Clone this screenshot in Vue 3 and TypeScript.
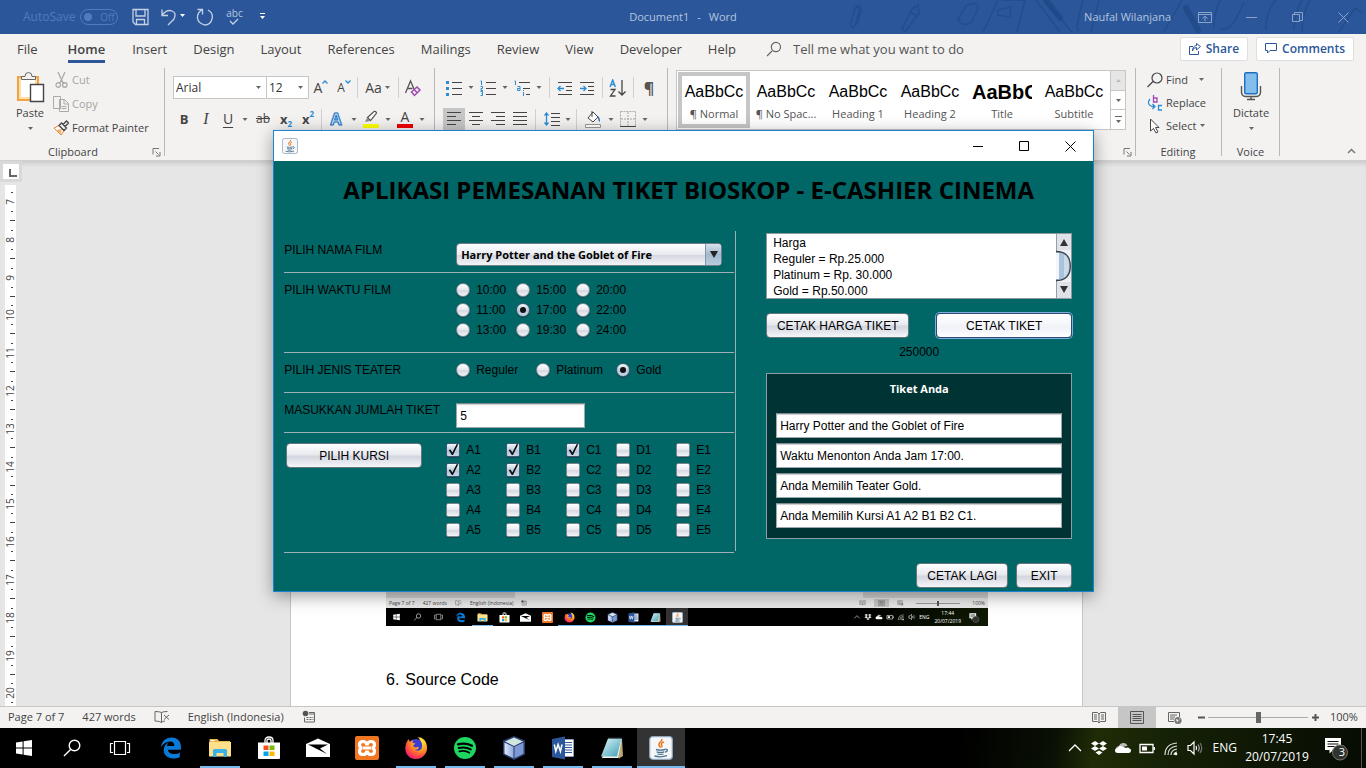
<script setup lang="ts">
import { ref } from 'vue'

const tabs = ['File', 'Home', 'Insert', 'Design', 'Layout', 'References', 'Mailings', 'Review', 'View', 'Developer', 'Help']

const styleCells = [
  { name: '¶ Normal', kind: 'plain', sample: 'AaBbCc' },
  { name: '¶ No Spac...', kind: 'plain', sample: 'AaBbCc' },
  { name: 'Heading 1', kind: 'plain', sample: 'AaBbCc' },
  { name: 'Heading 2', kind: 'plain', sample: 'AaBbCc' },
  { name: 'Title', kind: 'title', sample: 'AaBbC' },
  { name: 'Subtitle', kind: 'subtitle', sample: 'AaBbCc' },
]

const rulerNumbers = Array.from({ length: 14 }, (_, i) => ({ n: i + 7, y: Math.round(17 + i * 37.8) }))

const times = ['10:00', '15:00', '20:00', '11:00', '17:00', '22:00', '13:00', '19:30', '24:00']
const time = ref('17:00')
const theaters = ['Reguler', 'Platinum', 'Gold']
const theater = ref('Gold')
const films = ['Harry Potter and the Goblet of Fire']
const film = ref(films[0])
const amount = ref('5')
const seats = [1, 2, 3, 4, 5].flatMap((row) => ['A', 'B', 'C', 'D', 'E'].map((col) => col + row))
const chosen = ref<string[]>(['A1', 'A2', 'B1', 'B2', 'C1'])
const prices = ref('Harga\nReguler = Rp.25.000\nPlatinum = Rp. 30.000\nGold = Rp.50.000')
const ticket = ref([
  'Harry Potter and the Goblet of Fire',
  'Waktu Menonton Anda Jam 17:00.',
  'Anda Memilih Teater Gold.',
  'Anda Memilih Kursi A1 A2 B1 B2 C1.',
])

const system = ['start', 'search', 'taskview']
const apps = [
  { id: 'edge', open: false },
  { id: 'folder', open: true },
  { id: 'store', open: false },
  { id: 'mail', open: false },
  { id: 'xampp', open: false },
  { id: 'firefox', open: true },
  { id: 'spotify', open: true },
  { id: 'netbeans', open: true },
  { id: 'word', open: true },
  { id: 'notepad', open: true },
  { id: 'java', open: true },
]
const tray = ['up', 'dropbox', 'cloud', 'battery', 'wifi', 'sound']
</script>

<template>
  <div class="desktop">
    <svg class="sprite" aria-hidden="true">
      <defs>
        <linearGradient id="gCube" x1="0" x2="1"><stop offset="0" stop-color="#dfe9fb" /><stop offset="1" stop-color="#8fa9dc" /></linearGradient>
        <linearGradient id="gNote" x1="0" y1="0" x2="1" y2="1"><stop offset="0" stop-color="#e4f7fb" /><stop offset="1" stop-color="#3a9db4" /></linearGradient>
        <radialGradient id="gFox" cx="0.7" cy="0.2" r="0.9"><stop offset="0" stop-color="#fff044" /><stop offset="0.45" stop-color="#ff9a1f" /><stop offset="0.8" stop-color="#ff3a4c" /><stop offset="1" stop-color="#e3188b" /></radialGradient>
      </defs>
      <symbol id="start" viewBox="0 0 24 24"><path fill="#fff" d="M4 6.400l6.600-1v6.100H4zM11.600 5.200L20 4v7.500h-8.400zM4 12.500h6.600v6.100L4 17.600zM11.600 12.500H20V20l-8.400-1.200z" /></symbol>
      <symbol id="search" viewBox="0 0 24 24"><g fill="none" stroke="#fff" stroke-width="1.400"><circle cx="14.500" cy="9.500" r="5.300" /><path d="M10.800 13.200L4 20" /></g></symbol>
      <symbol id="taskview" viewBox="0 0 24 24"><g fill="none" stroke="#fff" stroke-width="1.200"><path d="M6.500 5.500h11v13h-11zM5 7.500H2.500v9H5M19 7.500h2.500v9H19" /></g></symbol>
      <symbol id="edge" viewBox="0 0 24 24"><path fill="#0a7ad8" d="M2 11C3 5 7 1.500 12.500 1.500c6.500 0 9.700 4.800 9.500 10.200v2H9c.3 3 3.200 4.300 6 4.300 2.300 0 4.200-.6 5.800-1.600v4.700c-2 1-4.200 1.500-6.600 1.500-5.800 0-9.500-3.600-9.500-8.500 0-3.500 2-6.300 5-7.700-1 .9-1.500 2-1.700 3.500h7.400c0-2.300-1.300-4.300-4.200-4.300C7.500 5.600 4 7.800 2 11z" /></symbol>
      <symbol id="folder" viewBox="0 0 24 24"><path fill="#e8b84c" d="M1.500 3h8l1.500 2h11v4h-20.500z" /><path fill="#ffe08a" d="M1 6h22v14.500H1z" /><path fill="#fff" d="M2.500 4h4v1h-4z" /><path fill="#38b0e8" d="M5 21v-6.500q0-1.500 1.500-1.500h11q1.500 0 1.500 1.500V21h-3.500v-4h-7v4z" /></symbol>
      <symbol id="store" viewBox="0 0 24 24"><path fill="none" stroke="#fff" stroke-width="1.300" d="M8 7V4.500Q8 1 12 1t4 3.500V7M10 7V4.500Q10 3 12 3t2 1.500V7" /><path fill="#fff" d="M1 6.500h22V22q0 1-1 1H2q-1 0-1-1z" /><path fill="#f25022" d="M6.500 9.500h5v4.500h-5z" /><path fill="#7fba00" d="M12.500 9.500h5v4.500h-5z" /><path fill="#00a4ef" d="M6.500 15.500h5v4.500h-5z" /><path fill="#ffb900" d="M12.500 15.500h5v4.500h-5z" /></symbol>
      <symbol id="mail" viewBox="0 0 24 24"><path fill="#fff" d="M0 8l12-5.500L24 8v13H0z" /><path fill="#000" d="M2 8.500h20l-8 4 7 5.500L12 13.500z" /></symbol>
      <symbol id="xampp" viewBox="0 0 24 24"><rect width="24" height="24" rx="2" fill="#ef7622" /><path fill="none" stroke="#fff" stroke-width="3.200" d="M8 5.500c-3 0-3.500 2-3.500 3.200 0 1.600 1 3.300 3 3.300-2 0-3 1.600-3 3.200S5.500 18.500 8 18.500s3.500-1.500 4-3.500c.5 2 1.500 3.500 4 3.500s3.500-1.700 3.500-3.300-1-3.200-3-3.200c2 0 3-1.700 3-3.300s-1-3.200-3.500-3.200-3.500 1.500-4 3.500c-.5-2-1.500-3.500-4-3.500zM8 12h8" /></symbol>
      <symbol id="firefox" viewBox="0 0 24 24"><circle cx="12" cy="12.500" r="9.500" fill="#3d3bd1" /><path fill="url(#gFox)" d="M2.500 6.500l2-3.500 1.500 3q1.200-1.600 3.500-2-1.500 1.500-.8 3l2.800.5-2.500 2.200q1 2.200 3.800 1.600 1.200-.8 2.200 0-1 3-4.500 2.500 4 2.500 7-1 1.500-5-1-8-1.500-2.500-3-3.800 4 .5 6 3Q17 2 15 1q5 1 7 5.500 2.500 6.500-.5 11-3.500 5.500-9.800 5.500-6 0-9.200-5.200Q0 12.500 2.500 6.500z" /></symbol>
      <symbol id="spotify" viewBox="0 0 24 24"><circle cx="12" cy="12" r="11" fill="#1ed760" /><g fill="none" stroke="#000" stroke-linecap="round"><path stroke-width="2.300" d="M5 8.300q7.500-2 14 1.400" /><path stroke-width="2" d="M5.700 12q6.500-1.700 12 1.400" /><path stroke-width="1.600" d="M6.300 15.400q5.500-1.400 10.200 1.300" /></g></symbol>
      <symbol id="netbeans" viewBox="0 0 24 24"><path fill="#2a3c6e" d="M12 0l11 4.500v14L12 24 1 18.500v-14z" /><path fill="#d0e6df" d="M12 1.500l9 4-9 4.500-9-4.500z" /><path fill="url(#gCube)" d="M2.500 6.500l9 4.300v11.500l-9-4.500z" /><path fill="#7d98d2" d="M21.500 6.500l-9 4.300v11.500l9-4.500z" /></symbol>
      <symbol id="word" viewBox="0 0 24 24"><path fill="#fff" stroke="#9ab2dc" stroke-width=".6" d="M12 3.500h10.500v17H12z" /><path stroke="#2b579a" stroke-width="1.200" d="M14 6.500h7M14 9h7M14 11.500h7M14 14h7M14 16.500h7" /><path fill="#2b579a" d="M1 3l13-2.500v23L1 21z" /><path fill="none" stroke="#fff" stroke-width="1.500" d="M3.300 8.500l1.500 7 2.300-7 2.300 7 1.600-7" /></symbol>
      <symbol id="notepad" viewBox="0 0 24 24"><path fill="#b9a878" d="M22 3l1 17-4 2.500-2-2z" /><path fill="#f4f4ec" d="M9 3h13l-4 19H2z" /><path fill="url(#gNote)" d="M8 2.500h13.500L17 20.500H1z" /><path stroke="#4a5a60" stroke-width="1.400" stroke-dasharray="1 1" d="M8.500 2.300H22" /></symbol>
      <symbol id="java" viewBox="0 0 24 24"><rect x=".7" y=".7" width="22.600" height="22.600" rx="3" fill="#f5f7f9" stroke="#8fa6bb" stroke-width="1.200" /><g fill="none" stroke="#e8751a" stroke-width="1.500"><path d="M12.800 3c1 2.500-4.500 3.800-2.600 6.500.5 1 1.300 1.500.8 2.300" /><path d="M15 6c-3 1-3 2-2.200 3.200.5.900.1 1.500-.4 2.100" /></g><g fill="none" stroke="#4b7291" stroke-width="1.300"><path d="M7 13.500q4.500 1.200 9.200 0M7.600 15.800q4 1.200 7.600 0M8.400 18q3 .9 6 0M5.500 20q6 1.700 12.500-.3M16.300 13.200c3.200-.4 2.500 2.500-.3 3" /></g></symbol>
      <symbol id="up" viewBox="0 0 18 18"><path fill="none" stroke="#fff" stroke-width="1.300" d="M3 12l6-6 6 6" /></symbol>
      <symbol id="dropbox" viewBox="0 0 18 18"><path fill="#fff" d="M5 2l4 2.500L5 7 1 4.500zM13 2l4 2.500L13 7 9 4.500zM5 7l4 2.500L5 12 1 9.500zM13 7l4 2.500-4 2.500-4-2.500zM9 11.500l3.500 2L9 16l-3.500-2.500z" /></symbol>
      <symbol id="cloud" viewBox="0 0 18 18"><path fill="#bbb" d="M2 9q1-2 3-2 1-3 4.500-3 3 0 4 3z" /><path fill="#fff" d="M4 14q-3 0-3-2.500T4 8.500q1.500-2 4-1.300L12 9q2-1 3.500.5Q17.500 10 17 12q-.3 2-2.500 2z" /></symbol>
      <symbol id="battery" viewBox="0 0 18 18"><path fill="none" stroke="#fff" stroke-width="1.300" d="M2 5.500h13v8H2z" /><path fill="#fff" d="M4 7.500h5v4H4zM15.500 8h1.500v3h-1.500z" /></symbol>
      <symbol id="wifi" viewBox="0 0 18 18"><g fill="none" stroke="#ddd" stroke-width="1.200"><path d="M3 16Q3 5 15 4M6 16q0-8 9-9M9 16q0-5 6-6M12 16q0-2.500 3-3" /></g><circle cx="14" cy="15" r="1.300" fill="#fff" /></symbol>
      <symbol id="sound" viewBox="0 0 18 18"><g fill="none" stroke="#fff" stroke-width="1.200"><path d="M2 6.500h2.500L8 3v12l-3.500-3.500H2z" /><path d="M10 7q1.200 2 0 4" /><path stroke="#aaa" d="M12 5.500q2.500 3.500 0 7" /><path stroke="#777" d="M14 4q3.500 5 0 10" /></g></symbol>
      <symbol id="caret" viewBox="0 0 7 5"><path fill="#666" d="M1 1h5L3.500 4z" /></symbol>
      <symbol id="launch" viewBox="0 0 9 9"><path fill="none" stroke="#777" d="M1 6.500v-6h6M3.500 3.500l3 3M8 4v4H4" /></symbol>
      <symbol id="proof" viewBox="0 0 16 14"><path fill="none" stroke="#666" d="M7.500 12.500v-10Q5.500 1.500 1 1.500v9.500q4.500 0 6.500 1.500Q9 11 11 11M7.500 2.500Q9 1.500 13.500 1.500M10 5l5 4.500M15 5l-5 4.500" /></symbol>
      <symbol id="macro" viewBox="0 0 14 14"><circle cx="3.500" cy="3.500" r="2.800" fill="#555" /><path fill="none" stroke="#666" d="M7 2.500h5.500v9.500h-10V7.500M7 4h5" /><path stroke="#666" stroke-dasharray="2 1" d="M4.500 7.500h7M4.500 9.500h7" /></symbol>
      <symbol id="read" viewBox="0 0 14 14"><path fill="none" stroke="#666" d="M7 3L5.500 1.500h-5v9h5L7 12l1.500-1.500h5v-9h-5zv9M2 4h3M2 6h3M2 8h3M9 4h3M9 6h3M9 8h3" /></symbol>
      <symbol id="print" viewBox="0 0 14 14"><path fill="none" stroke="#555" d="M.5.500h13v12H.5zM2.500 3.500h9M2.500 5.500h9M2.500 7.500h9M2.500 9.500h9" /></symbol>
      <symbol id="web" viewBox="0 0 14 14"><path fill="none" stroke="#666" d="M6 10.500H.5v-9h11V6M2 4h7M2 6h5M2 8h4" /><circle cx="10" cy="9.500" r="3.600" fill="#777" /><path fill="#f3f2f1" d="M8 8l2.500 1-.5 2-1.500-1zM11 6.500l1.500 2h-1z" /></symbol>
      <symbol id="bell" viewBox="0 0 26 26"><path fill="#fff" d="M1 3h16v12H9l-3.500 3.500V15H1z" /><path stroke="#111" stroke-width="1.200" d="M3.500 6.500h11M3.500 9h11M3.500 11.500h7" /><circle cx="16" cy="17.500" r="7.500" fill="#30332e" stroke="#777" /></symbol>
    </svg>

    <header class="titlebar">
      <svg class="doodles" viewBox="0 0 520 34" aria-hidden="true">
        <g fill="none" stroke="#1e4684" stroke-opacity=".6" stroke-width="1.500">
          <path d="M8 10q3-6 6-3l-4 16q-3 8-6 2L9 9q6-5 6 2l-4 14M56 29l10-20 6-4 1 8-14 19zM63 12l7 3" />
          <path d="M112 19l8-13q10-6 12 2l-6 14q-10 6-14-3zM137 32l16-34M155 0h24l-8 32M152 10l13-3-1 10-12-2zM198 0l28 32M190 0l24 32M233 29q-5 5 4-29M245 32l8-32M318 32l18-32M368 28q0-16 6-28M374 28q10 8 24-26M420 30q0-20 10-30M456 32q0-18 8-32M448 30q0-16 8-30M493 32l16-24 8 5" />
        </g>
        <path fill="none" stroke="#1e4684" stroke-opacity=".7" stroke-width="6" stroke-linecap="round" d="M340 8l12 22M200 0l14 18" />
      </svg>
      <div class="quick">
        <span class="autosave">AutoSave</span>
        <button class="toggle" type="button"><i></i>Off</button>
        <button type="button" class="q" aria-label="Save"><svg width="18" height="18" viewBox="0 0 18 18"><path class="ln" d="M1 1.500h15v15H3.500L1 14zM4 1.500V8h9V1.500M4.500 16.500v-5h8v5" /></svg></button>
        <button type="button" class="q" aria-label="Undo"><svg width="26" height="18" viewBox="0 0 26 18"><path class="ln" d="M2 1.500v6h6M2 7q5-6 10-4t2 8l-6 6" /><path fill="#fff" d="M20 6h5l-2.500 3z" /></svg></button>
        <button type="button" class="q" aria-label="Repeat"><svg width="18" height="18" viewBox="0 0 18 18"><path class="ln" d="M1.500 1.500h5v5M6 2Q1 5 1.500 10t7 7q6 0 7.500-6T12 2" /></svg></button>
        <button type="button" class="q abc" aria-label="Spelling"><span>abc</span><svg width="10" height="7" viewBox="0 0 10 7"><path class="ln" d="M1 3l3 3 5-5" /></svg></button>
        <button type="button" class="q more" aria-label="Customize"><svg width="7" height="8" viewBox="0 0 7 8"><path fill="#fff" d="M1 0h5v1H1zM1 3h5L3.500 6z" /></svg></button>
      </div>
      <div class="doc-name"><span>Document1</span><span>-</span><span>Word</span></div>
      <div class="account">
        <span>Naufal Wilanjana</span>
        <button type="button" aria-label="Ribbon options"><svg width="14" height="11" viewBox="0 0 14 11"><path class="dim" d="M.5.500h13v10H.5zM.5 2.500h13M7 9V4.500M4.500 6.500L7 4.200l2.500 2.300" /></svg></button>
        <button type="button" aria-label="Minimize"><svg width="11" height="11" viewBox="0 0 11 11"><path class="dim" d="M0 5.500h11" /></svg></button>
        <button type="button" aria-label="Restore"><svg width="11" height="11" viewBox="0 0 11 11"><path class="dim" d="M.5 2.500h7v7h-7zM2.500 2.500v-2h8v8h-3" /></svg></button>
        <button type="button" aria-label="Close"><svg width="11" height="11" viewBox="0 0 11 11"><path class="dim" d="M.5.500l10 10M10.500.500l-10 10" /></svg></button>
      </div>
    </header>

    <nav class="tabs">
      <button v-for="t in tabs" :key="t" type="button" :class="{ on: t === 'Home' }">{{ t }}</button>
      <svg width="16" height="16" viewBox="0 0 16 16"><path fill="none" stroke="#666" stroke-width="1.200" d="M6 10L1 15M5.300 6a4.600 4.600 0 1 1 9.200 0 4.600 4.600 0 1 1-9.200 0z" /></svg>
      <input class="tell" type="text" placeholder="Tell me what you want to do" aria-label="Tell me what you want to do" />
      <button type="button" class="pill"><svg width="12" height="12" viewBox="0 0 12 12"><path fill="none" stroke="#2b579a" d="M4 3.500H.5v8h9V8M3.500 8q0-3.500 4-3.500V7l4-3.500L7.500.500v2Q3.500 3 3.500 8z" /></svg>Share</button>
      <button type="button" class="pill"><svg width="12" height="12" viewBox="0 0 12 12"><path fill="none" stroke="#2b579a" d="M.5.500h11v7H5L2.500 10V7.500h-2z" /></svg>Comments</button>
    </nav>

    <section class="ribbon">
      <div class="group clip">
        <div class="row">
          <button type="button" class="big">
            <svg width="30" height="32" viewBox="0 0 30 32"><path fill="#fff" stroke="#f2a344" stroke-width="2" d="M3 6h20v23H3z" /><path fill="none" stroke="#fbe0a5" stroke-width="2" d="M5 8h16v19H5z" /><path fill="#f3f2f1" stroke="#666" d="M6.500 8.500V5.500H10q0-4 3.500-4t3.500 4h3.500v3z" /><path fill="#fff" stroke="#444" stroke-width="1.400" d="M15.500 13.500h13v17h-13z" /></svg>
            Paste<svg class="caret" width="7" height="5"><use href="#caret" /></svg>
          </button>
          <div class="stack">
            <button type="button" class="off"><svg width="16" height="16" viewBox="0 0 16 16"><path fill="none" stroke="#aaa" stroke-width="1.300" d="M5 0l5 11M12 0L7 11M3 13a2.200 2.200 0 1 1 4.500 0 2.200 2.200 0 1 1-4.500 0M9.500 13a2.200 2.200 0 1 1 4.500 0 2.200 2.200 0 1 1-4.500 0" /></svg>Cut</button>
            <button type="button" class="off"><svg width="16" height="16" viewBox="0 0 16 16"><path fill="#f3f2f1" stroke="#aaa" d="M.5.500h7v12h-7zM6.500 3.500h5l4 4v8h-9zM11 4v4h4M8.500 10.500h5M8.500 12.500h5" /></svg>Copy</button>
            <button type="button"><svg width="16" height="16" viewBox="0 0 16 16"><path fill="#fff" stroke="#e8823a" d="M1 8l5-2.500 5 5L8 15z" /><path fill="#f2b26a" d="M3 10l6-1-1.500 5z" /><path fill="none" stroke="#444" stroke-width="1.300" d="M6 5.500L8.500 3l5 5-2.500 2.500zM10 4.500l3.500-3.500L15.500 3 12 6.500" /></svg>Format Painter</button>
          </div>
        </div>
        <div class="label">Clipboard<svg width="9" height="9"><use href="#launch" /></svg></div>
      </div>

      <div class="group font">
        <div class="tools first">
          <label class="combo w94"><input type="text" value="Arial" aria-label="Font" /><svg width="7" height="5"><use href="#caret" /></svg></label>
          <label class="combo w42"><input type="text" value="12" aria-label="Font size" /><svg width="7" height="5"><use href="#caret" /></svg></label>
          <button type="button" class="w24 grow">A<svg width="6" height="4" viewBox="0 0 6 4"><path fill="none" stroke="#2a8dd4" stroke-width="1.300" d="M.5 3.500L3 1l2.500 2.500" /></svg></button>
          <button type="button" class="w22 grow small">A<svg width="6" height="4" viewBox="0 0 6 4"><path fill="none" stroke="#2a8dd4" stroke-width="1.300" d="M.5.500L3 3 5.500.500" /></svg></button>
          <i class="bar"></i>
          <button type="button" class="w36 case">Aa<svg width="7" height="5"><use href="#caret" /></svg></button>
          <i class="bar"></i>
          <button type="button" class="w24" aria-label="Clear formatting"><svg width="18" height="18" viewBox="0 0 18 18"><path fill="none" stroke="#555" stroke-width="1.300" d="M1.500 14L6.500 2 10 10M3.500 9.500h5" /><path fill="#f3f2f1" stroke="#a349b5" stroke-width="1.500" d="M7.500 13l5.500-5 3 3-5.500 5.500zM10 10.500l3 3" /></svg></button>
        </div>
        <div class="tools">
          <button type="button" class="w22 bold">B</button>
          <button type="button" class="w22 ital">I</button>
          <button type="button" class="w22 under">U</button>
          <svg width="12" height="5"><use href="#caret" /></svg>
          <button type="button" class="w24 strike">ab</button>
          <button type="button" class="w22 bold">x<sub>2</sub></button>
          <button type="button" class="w22 bold">x<sup>2</sup></button>
          <i class="bar"></i>
          <button type="button" class="w24 fx">A</button>
          <svg width="12" height="5"><use href="#caret" /></svg>
          <button type="button" class="w22" aria-label="Highlight"><svg width="18" height="18" viewBox="0 0 18 18"><path fill="#ff0" d="M1 14h16v4H1z" /><path fill="#888" d="M3 12l2-4 3 3z" /><path fill="#fff" stroke="#555" stroke-width="1.200" d="M5.500 7.500L12 1.500q2-.5 2.500 1.500L8.500 10.500z" /></svg></button>
          <svg width="12" height="5"><use href="#caret" /></svg>
          <button type="button" class="w22 ink">A</button>
          <svg width="12" height="5"><use href="#caret" /></svg>
        </div>
      </div>

      <div class="group para">
        <div class="tools first">
          <button type="button" class="w22" aria-label="Bullets"><svg width="16" height="16" viewBox="0 0 16 16"><path stroke="#444" d="M6 2.500h10M6 8.500h10M6 14.500h10" /><path fill="#2a8dd4" d="M0 1h3v3H0zM0 7h3v3H0zM0 13h3v3H0z" /></svg></button>
          <svg width="12" height="5"><use href="#caret" /></svg>
          <button type="button" class="w22" aria-label="Numbering"><svg width="16" height="16" viewBox="0 0 16 16"><path stroke="#444" d="M6 2.500h10M6 8.500h10M6 14.500h10" /><path fill="none" stroke="#2a8dd4" d="M.5 1h1v4M.5 6.500h2v2h-1.500v2h2M.5 11.500h2v2h-1M.5 15.500h2v-2" /></svg></button>
          <svg width="12" height="5"><use href="#caret" /></svg>
          <button type="button" class="w22" aria-label="Multilevel"><svg width="16" height="16" viewBox="0 0 16 16"><path stroke="#444" d="M5 2.500h11M9 8.500h7M12 14.500h4" /><path fill="none" stroke="#2a8dd4" d="M.5 1h1v4M3.500 6.500h2.500v4H3.500v-2H6M9.500 12v4M9.500 10v1" /></svg></button>
          <svg width="12" height="5"><use href="#caret" /></svg>
          <i class="bar wide"></i>
          <button type="button" class="w22" aria-label="Outdent"><svg width="16" height="16" viewBox="0 0 16 16"><path stroke="#444" d="M1 2.500h14M9 6.500h6M9 10.500h6M1 14.500h14" /><path fill="none" stroke="#2a8dd4" stroke-width="1.300" d="M7 8.500H1M3.500 6L1 8.500 3.500 11" /></svg></button>
          <button type="button" class="w22" aria-label="Indent"><svg width="16" height="16" viewBox="0 0 16 16"><path stroke="#444" d="M1 2.500h14M9 6.500h6M9 10.500h6M1 14.500h14" /><path fill="none" stroke="#2a8dd4" stroke-width="1.300" d="M1 8.500h6M4.500 6L7 8.500 4.500 11" /></svg></button>
          <i class="bar wide"></i>
          <button type="button" class="w22" aria-label="Sort"><svg width="18" height="18" viewBox="0 0 18 18"><path fill="none" stroke="#2a8dd4" stroke-width="1.400" d="M1 8l2.700-7 2.700 7M2 5.500h3.500" /><path fill="none" stroke="#444" stroke-width="1.300" d="M1.500 10.500H6L1.500 17H6.500M13 1v15M9.500 12.500L13 16l3.500-3.500" /></svg></button>
          <i class="bar wide"></i>
          <button type="button" class="w22 pil">¶</button>
        </div>
        <div class="tools">
          <button type="button" class="w22 sel" aria-label="Align left"><svg width="14" height="14" viewBox="0 0 14 14"><path stroke="#444" d="M0 .5h14M0 4.500h9M0 8.500h14M0 12.500h9" /></svg></button>
          <button type="button" class="w22" aria-label="Center"><svg width="14" height="14" viewBox="0 0 14 14"><path stroke="#444" d="M0 .5h14M3 4.500h8M0 8.500h14M3 12.500h8" /></svg></button>
          <button type="button" class="w22" aria-label="Align right"><svg width="14" height="14" viewBox="0 0 14 14"><path stroke="#444" d="M0 .5h14M5 4.500h9M0 8.500h14M5 12.500h9" /></svg></button>
          <button type="button" class="w22" aria-label="Justify"><svg width="14" height="14" viewBox="0 0 14 14"><path stroke="#444" d="M0 .5h14M0 4.500h14M0 8.500h14M0 12.500h14" /></svg></button>
          <i class="bar wide"></i>
          <button type="button" class="w24" aria-label="Line spacing"><svg width="16" height="14" viewBox="0 0 16 14"><path stroke="#444" d="M7 1.500h9M7 5.500h9M7 9.500h9M7 13.500h9" /><path fill="none" stroke="#2a8dd4" stroke-width="1.300" d="M2.500 1v12M.5 3.500l2-2.500 2 2.500M.5 10.500l2 2.500 2-2.500" /></svg></button>
          <svg width="8" height="5"><use href="#caret" /></svg>
          <i class="bar wide"></i>
          <button type="button" class="w24" aria-label="Shading"><svg width="18" height="18" viewBox="0 0 18 18"><path fill="#fff" stroke="#444" d="M4 8l5-6 5 5-5 5zM8 1v6" /><path fill="#2a6db4" d="M13 6q3 0 3 6-2-1-2-4z" /><path fill="#fff" stroke="#999" d="M1.500 14.500h15v3h-15z" /></svg></button>
          <svg width="12" height="5"><use href="#caret" /></svg>
          <button type="button" class="w22" aria-label="Borders"><svg width="16" height="16" viewBox="0 0 16 16"><path fill="none" stroke="#aaa" stroke-dasharray="2 1" d="M.5.500h15v15M.5.500v15M8 1v14M1 8h14" /><path stroke="#444" d="M0 15.500h16" /></svg></button>
          <svg width="12" height="5"><use href="#caret" /></svg>
        </div>
      </div>

      <div class="group styles">
        <div class="gallery">
          <button v-for="(s, i) in styleCells" :key="s.name" type="button" class="cell" :class="[s.kind, { picked: i === 0 }]">
            <b>{{ s.sample }}</b><span>{{ s.name }}</span>
          </button>
          <div class="scroll">
            <button type="button" class="dis" aria-label="Up"><svg width="7" height="5" viewBox="0 0 7 5"><path fill="#bbb" d="M1 4h5L3.500 1z" /></svg></button>
            <button type="button" aria-label="Down"><svg width="7" height="5"><use href="#caret" /></svg></button>
            <button type="button" aria-label="More"><svg width="7" height="8" viewBox="0 0 7 8"><path fill="#666" d="M0 0h7v1H0zM1 4h5L3.500 7z" /></svg></button>
          </div>
        </div>
        <div class="label"><svg width="9" height="9"><use href="#launch" /></svg></div>
      </div>

      <div class="group edit">
        <div class="stack">
          <button type="button"><svg width="16" height="16" viewBox="0 0 16 16"><path fill="none" stroke="#444" stroke-width="1.200" d="M6 9.500L.5 15M5 6a5 5 0 1 1 10 0 5 5 0 1 1-10 0z" /></svg>Find<svg class="far" width="7" height="5"><use href="#caret" /></svg></button>
          <button type="button"><svg width="16" height="16" viewBox="0 0 16 16"><path fill="none" stroke="#a349b5" stroke-width="1.300" d="M6.500 0v7h3.500v-4H6.500" /><path fill="none" stroke="#2a8dd4" stroke-width="1.300" d="M3 4q-4 5 2 7.500H8M5.500 9L8 11.500 5.500 14M15 10.500h-3.500v4.500H15" /></svg>Replace</button>
          <button type="button"><svg width="16" height="16" viewBox="0 0 16 16"><path fill="#fff" stroke="#444" d="M3.500 1v12l3-2.500 2.500 4.500 2-1-2.500-4.500h3.500z" /></svg>Select<svg width="7" height="5"><use href="#caret" /></svg></button>
        </div>
        <div class="label">Editing</div>
      </div>
      <div class="group voice">
        <button type="button" class="big">
          <svg width="22" height="32" viewBox="0 0 22 32"><rect x="4.700" y="1.700" width="12.600" height="21" rx="1.500" fill="#83beec" stroke="#1b6fbf" stroke-width="1.400" /><path fill="none" stroke="#555" stroke-width="1.400" d="M1.500 15v6q0 4 4 4.500h11q4-.5 4-4.500v-6M11 26v2M7 28.500h8" /></svg>
          Dictate<svg class="caret" width="7" height="5"><use href="#caret" /></svg>
        </button>
        <div class="label">Voice</div>
      </div>
      <button class="fold" type="button" aria-label="Collapse"><svg width="9" height="6" viewBox="0 0 9 6"><path fill="none" stroke="#777" stroke-width="1.500" d="M1 5l3.500-3.500L8 5" /></svg></button>
    </section>

    <main class="workspace">
      <aside class="ruler">
        <div class="corner"><i></i></div>
        <svg width="11" height="521" viewBox="0 0 11 521">
          <g v-for="r in rulerNumbers" :key="r.n">
            <text :transform="`translate(9 ${r.y}) rotate(-90)`" text-anchor="middle">{{ r.n }}</text>
            <path stroke="#444" :d="`M6 ${r.y - 9.5}h2M6 ${r.y + 9.5}h2M5 ${r.y + 18.5}h5`" />
          </g>
        </svg>
      </aside>
      <article class="page">
        <figure class="shot">
          <div class="shot-doc"><i></i></div>
          <div class="shot-status">
            <span>Page 7 of 7</span><span>427 words</span><svg width="7" height="6"><use href="#proof" /></svg><span>English (Indonesia)</span><svg width="6" height="6"><use href="#macro" /></svg>
            <span class="push"></span>
            <svg width="7" height="6"><use href="#read" /></svg><b><svg width="7" height="6"><use href="#print" /></svg></b><svg width="7" height="6"><use href="#web" /></svg>
            <em><i></i></em><span>100%</span>
          </div>
          <div class="shot-bar">
            <svg v-for="s in system" :key="s" width="21" height="10"><use :href="'#' + s" /></svg>
            <div class="shot-apps">
              <span v-for="a in apps" :key="a.id" :class="{ lit: a.open, front: a.id === 'java' }"><svg width="11" height="11"><use :href="'#' + a.id" /></svg></span>
            </div>
            <div class="shot-tray">
              <svg v-for="t in tray" :key="t" width="8" height="8"><use :href="'#' + t" /></svg>
              <span>ENG</span><span class="clk">17:44<br />20/07/2019</span><svg width="11" height="11"><use href="#bell" /></svg>
            </div>
          </div>
        </figure>
        <p><span>6.</span><span>Source Code</span></p>
      </article>
    </main>

    <footer class="status">
      <span>Page 7 of 7</span><span>427 words</span><svg width="16" height="14"><use href="#proof" /></svg><span>English (Indonesia)</span><svg width="14" height="14"><use href="#macro" /></svg>
      <div class="views">
        <button type="button" aria-label="Read mode"><svg width="14" height="14"><use href="#read" /></svg></button>
        <button type="button" class="sel" aria-label="Print layout"><svg width="14" height="14"><use href="#print" /></svg></button>
        <button type="button" aria-label="Web layout"><svg width="14" height="14"><use href="#web" /></svg></button>
        <button type="button" class="z" aria-label="Zoom out"><svg width="7" height="7" viewBox="0 0 7 7"><path stroke="#555" stroke-width="2" d="M0 3.500h7" /></svg></button>
        <input type="range" min="0" max="200" value="100" aria-label="Zoom" />
        <button type="button" class="z" aria-label="Zoom in"><svg width="7" height="7" viewBox="0 0 7 7"><path stroke="#555" stroke-width="2" d="M0 3.500h7M3.500 0v7" /></svg></button>
        <span>100%</span>
      </div>
    </footer>

    <footer class="taskbar">
      <button v-for="s in system" :key="s" type="button" class="task" :aria-label="s"><svg width="24" height="24"><use :href="'#' + s" /></svg></button>
      <div class="apps">
        <button v-for="a in apps" :key="a.id" type="button" class="task" :class="{ open: a.open, active: a.id === 'java' }" :aria-label="a.id"><svg width="24" height="24"><use :href="'#' + a.id" /></svg></button>
      </div>
      <div class="tray">
        <svg v-for="t in tray" :key="t" width="18" height="18"><use :href="'#' + t" /></svg>
        <span class="lang">ENG</span>
        <span class="clock">17:45<br />20/07/2019</span>
        <button type="button" class="bell"><svg width="26" height="26"><use href="#bell" /></svg><b>3</b></button>
      </div>
    </footer>

    <section class="window">
      <header>
        <svg width="16" height="16"><use href="#java" /></svg>
        <button type="button" aria-label="Minimize"><svg width="11" height="11" viewBox="0 0 11 11"><path stroke="#000" d="M0 5.500h10" /></svg></button>
        <button type="button" aria-label="Maximize"><svg width="11" height="11" viewBox="0 0 11 11"><path fill="none" stroke="#000" d="M.5.500h9v9h-9z" /></svg></button>
        <button type="button" aria-label="Close"><svg width="11" height="11" viewBox="0 0 11 11"><path stroke="#000" d="M.5.500l10 10M10.500.500l-10 10" /></svg></button>
      </header>
      <h1>APLIKASI PEMESANAN TIKET BIOSKOP - E-CASHIER CINEMA</h1>
      <div class="cols">
        <form class="form" @submit.prevent>
          <div class="line r42">
            <label for="film">PILIH NAMA FILM</label>
            <span class="select">
              <select id="film" v-model="film"><option v-for="f in films" :key="f">{{ f }}</option></select>
              <i><svg width="8" height="8" viewBox="0 0 8 8"><path fill="#222" d="M0 0h8L4 7z" /></svg></i>
            </span>
          </div>
          <fieldset class="line r80">
            <legend>PILIH WAKTU FILM</legend>
            <div class="times"><label v-for="t in times" :key="t"><input v-model="time" type="radio" name="time" :value="t" />{{ t }}</label></div>
          </fieldset>
          <fieldset class="line r40">
            <legend>PILIH JENIS TEATER</legend>
            <div class="theaters"><label v-for="t in theaters" :key="t"><input v-model="theater" type="radio" name="theater" :value="t" />{{ t }}</label></div>
          </fieldset>
          <div class="line r40">
            <label for="amount">MASUKKAN JUMLAH TIKET</label>
            <input id="amount" v-model="amount" class="field short" type="text" />
          </div>
          <div class="line r120">
            <button type="button" class="btn seat-btn">PILIH KURSI</button>
            <div class="seats"><label v-for="s in seats" :key="s"><input v-model="chosen" type="checkbox" :value="s" />{{ s }}</label></div>
          </div>
        </form>
        <div class="rule"></div>
        <div class="side">
          <div class="area">
            <textarea v-model="prices" aria-label="Harga" readonly></textarea>
            <svg width="15" height="64" viewBox="0 0 15 64"><path fill="#dfe2e8" d="M0 0h15v64H0z" /><path fill="#fff" d="M2 16v32h13V16z" opacity=".5" /><path stroke="#9a9ea6" d="M.5 0v64" /><path fill="#333" d="M4 12h8L8 5zM4 52h8l-4 7z" /><path fill="#a9c3da" stroke="#39424f" stroke-width="1.300" d="M0 17.500q14.300 0 14.300 14.500T0 46.500" /><path fill="#fff" d="M0 19h3v26H0z" opacity=".85" /><path fill="#fff" d="M8 20.500q5 4 5 11.500t-5 11.500z" opacity=".4" /></svg>
          </div>
          <div class="actions">
            <button type="button" class="btn w143">CETAK HARGA TIKET</button>
            <button type="button" class="btn w136 focus">CETAK TIKET</button>
          </div>
          <output>250000</output>
          <div class="ticket">
            <h2>Tiket Anda</h2>
            <input v-for="(t, i) in ticket" :key="i" v-model="ticket[i]" class="field" type="text" :aria-label="'Tiket ' + (i + 1)" />
          </div>
          <div class="foot">
            <button type="button" class="btn w92">CETAK LAGI</button>
            <button type="button" class="btn w56">EXIT</button>
          </div>
        </div>
      </div>
    </section>
  </div>
</template>

<style>
body { margin: 0; overflow: hidden; }
</style>

<style scoped>
* { box-sizing: border-box; }
.desktop { position: relative; display: flex; flex-direction: column; height: 100vh; min-height: 700px; overflow: hidden; font: 11px/16px "Open Sans", "Noto Sans", sans-serif; color: #444; background: #e6e6e6; }
.sprite { position: absolute; width: 0; height: 0; }
button { padding: 0; border: 0; background: none; font: inherit; color: inherit; display: flex; align-items: center; justify-content: center; }
input, select, textarea { font: inherit; color: inherit; margin: 0; }
svg { flex: none; display: block; }

.titlebar { position: relative; flex: none; height: 34px; display: grid; grid-template-columns: 1fr auto 1fr; align-items: center; background: #2b579a; color: #b4c5df; }
.doodles { position: absolute; right: 0; top: 0; width: 520px; height: 34px; }
.quick { display: flex; align-items: center; padding-left: 23px; }
.autosave { color: #4f7cbb; font-size: 12px; margin-right: 5px; }
.toggle { width: 38px; height: 16px; border: 1px solid #4f7cbb; border-radius: 8px; color: #4f7cbb; font-size: 10px; gap: 8px; margin-right: 7px; }
.toggle i { width: 8px; height: 8px; border-radius: 4px; background: #4f7cbb; }
.q { width: 32px; height: 28px; }
.abc { flex-direction: column; font-size: 10px; line-height: 9px; width: 26px; }
.more { width: 30px; }
.ln { fill: none; stroke: #c5d2e6; stroke-width: 1.3; }
.dim { fill: none; stroke: #8aa3cb; }
.doc-name { display: flex; gap: 8px; }
.account { position: relative; display: flex; align-items: center; justify-content: flex-end; }
.account span { margin-right: 11px; }
.account button { width: 46px; height: 30px; }

.tabs { flex: none; height: 31px; display: flex; align-items: center; background: #f3f2f1; padding: 0 12px 2px 4px; font-size: 13px; }
.tabs > button { height: 28px; margin: 0 13px; position: relative; }
.tabs > button:first-child { margin-right: 17px; }
.tabs > button.on { font-weight: 600; margin-right: 14px; }
.tabs > button.on::after { content: ""; position: absolute; left: 0; right: 0; bottom: 0; height: 3px; background: #2b579a; }
.tabs > svg { margin: 0 11px 0 17px; }
.tell { flex: 1; border: 0; background: none; padding: 0; outline: 0; }
.tell::placeholder { color: #555; opacity: 1; }
.tabs > .pill { height: 24px; margin: 0 0 0 8px; padding: 0 8px; gap: 5px; background: #fff; border: 1px solid #e1dfdd; border-radius: 2px; color: #2b579a; font-size: 12px; font-weight: 600; }

.ribbon { flex: none; height: 96px; position: relative; display: flex; background: #f3f2f1; border-bottom: 1px solid #d2d0ce; }
.group { position: relative; padding-top: 3px; border-right: 1px solid transparent; display: flex; flex-direction: column; }
.group::after { content: ""; position: absolute; right: -1px; top: 3px; bottom: 4px; width: 1px; background: #b9b8b7; }
.row { display: flex; }
.label { margin-top: auto; height: 16px; line-height: 16px; text-align: center; position: relative; }
.label svg { position: absolute; right: 3px; top: 4px; }
.clip { width: 165px; }
.clip .label { padding-right: 18px; }
.big { flex-direction: column; justify-content: flex-start; width: 30px; margin-left: 15px; padding-top: 3px; }
.big > svg:first-child { margin-bottom: 2px; }
.big .caret { margin-top: 5px; }
.stack { display: flex; flex-direction: column; align-items: flex-start; }
.stack button { height: 24px; gap: 3px; }
.clip .stack { margin-left: 8px; }
.off { color: #a6a4a2; }
.font { width: 270px; padding-left: 8px; }
.para { width: 233px; padding-left: 8px; }
.tools { display: flex; align-items: center; height: 32px; flex: none; font-size: 14px; }
.first { margin-top: 4px; height: 31px; }
.w22 { width: 22px; height: 22px; }
.w24 { width: 24px; height: 22px; }
.w36 { width: 36px; height: 22px; }
.bar { width: 1px; height: 21px; background: #d2d0ce; margin: 0 2px; }
.bar.wide { margin: 0 4px; }
.combo { height: 23px; border: 1px solid #c6c6c6; background: #fff; display: flex; align-items: center; font-size: 12px; padding: 0 4px 0 2px; }
.combo input { width: 100%; min-width: 0; border: 0; padding: 0; outline: 0; color: #333; }
.w94 { width: 94px; }
.w42 { width: 43px; margin-left: -1px; }
.grow { align-items: flex-start; line-height: 22px; }
.grow svg { margin-top: 3px; }
.small { font-size: 12px; }
.case { gap: 2px; }
.bold { font-weight: 700; font-size: 13px; }
.bold sub, .bold sup { font-size: 8px; line-height: 8px; color: #2a8dd4; }
.bold sub { margin-top: 10px; }
.bold sup { margin-bottom: 10px; }
.ital { font-family: "Liberation Serif", serif; font-style: italic; font-size: 16px; }
.under { text-decoration: underline; text-underline-offset: 3px; }
.strike { text-decoration: line-through; font-size: 12px; }
.fx { font-weight: 700; font-size: 16px; color: #d6ebfb; -webkit-text-stroke: 1px #1b74c4; text-shadow: 0 0 1px #1b74c4; }
.ink { line-height: 14px; height: 18px; border-bottom: 4px solid #e00; width: 16px; margin: 0 3px; }
.pil { font-size: 16px; font-weight: 700; color: #555; }
.sel { background: #c6c6c6; }
.styles { width: 468px; padding-left: 8px; }
.gallery { margin-top: 2px; height: 60px; width: 450px; display: flex; background: #fff; border: 1px solid #c6c6c6; padding-left: 1px; }
.cell { width: 72px; height: 56px; margin-top: 1px; flex-direction: column; justify-content: flex-start; border: 4px solid transparent; padding-top: 5px; }
.cell b { width: 62px; height: 22px; overflow: hidden; font: 400 16px/22px "Liberation Sans", Arial, sans-serif; color: #000; text-align: center; white-space: nowrap; }
.cell span { margin-top: 3px; color: #555; white-space: nowrap; }
.cell.title b { width: 60px; font-weight: 700; font-size: 20px; text-align: left; }
.picked { border-color: #c6c6c6; }
.scroll { margin-left: auto; width: 15px; display: flex; flex-direction: column; border-left: 1px solid #c6c6c6; }
.scroll button { flex: 1; border-bottom: 1px solid #c6c6c6; }
.scroll button:last-child { border-bottom: 0; }
.scroll .dis { background: #e6e6e6; }
.edit { width: 86px; padding-left: 11px; }
.edit .stack button { height: 23px; }
.edit .far { margin-left: 7px; }
.edit .label { padding-right: 12px; }
.voice { width: 58px; }
.voice .big { width: 40px; margin-left: 9px; }
.fold { position: absolute; right: 8px; bottom: 3px; width: 14px; height: 12px; }

.workspace { flex: 1; min-height: 0; position: relative; display: flex; overflow: hidden; box-shadow: inset 0 6px 6px -5px #bbb; }
.ruler { width: 22px; flex: none; }
.ruler svg { margin: 3px 0 0 5px; background: #fff; overflow: visible; }
.ruler text { font: 10px "Open Sans", sans-serif; fill: #444; }
.corner { height: 21px; background: #d9d9d9; padding: 3px; }
.corner i { display: block; width: 16px; height: 15px; background: #fff; position: relative; }
.corner i::after { content: ""; position: absolute; left: 6px; top: 5px; width: 6px; height: 6px; border-left: 2px solid #666; border-bottom: 2px solid #666; }
.page { width: 793px; margin: 0 auto 0 268px; background: #fff; border: solid #c6c6c6; border-width: 0 1px; padding: 400px 94px 0 95px; overflow: hidden; }
.shot { margin: 0; width: 602px; font-size: 5px; line-height: 9px; }
.shot-doc { height: 37px; background: #d4d4d4; padding-left: 129px; }
.shot-doc i { display: block; height: 37px; width: 348px; background: #f0f0f0; }
.shot-status { height: 10px; display: flex; align-items: center; gap: 8px; padding: 0 3px; background: #e9e9e9; white-space: nowrap; }
.shot-status .push { flex: 1; }
.shot-status b { background: #c6c6c6; padding: 1px 4px; }
.shot-status em { width: 44px; height: 1px; margin: 0 4px; background: #999; display: flex; align-items: center; justify-content: center; }
.shot-status em i { width: 2px; height: 5px; background: #555; flex: none; }
.shot-bar { height: 18px; display: flex; align-items: center; background: linear-gradient(90deg, #000 78%, #0f1a04); color: #fff; }
.shot-apps { display: flex; width: 238px; margin-left: 1px; }
.shot-apps span { flex: 1; height: 18px; display: flex; justify-content: center; align-items: center; }
.shot-apps .lit { box-shadow: inset 0 -1px #76b9ed; }
.shot-apps .front { background: #333; }
.shot-tray { margin-left: auto; display: flex; align-items: center; gap: 3px; padding-right: 8px; }
.clk { text-align: center; margin: 0 5px 0 2px; line-height: 8px; }
.page p { margin: 44px 0 0; display: flex; gap: 6px; font: 16px/20px "Liberation Sans", Arial, sans-serif; color: #000; }

.status { flex: none; height: 22px; display: flex; align-items: center; background: #f3f2f1; border-top: 1px solid #c6c6c6; padding: 0 8px; gap: 18px; }
.status span, .status > svg { margin-bottom: 2px; }
.views { margin-left: auto; display: flex; align-items: center; }
.views button { width: 38px; height: 21px; }
.views .z { width: 14px; }
.views span { width: 28px; margin-left: 8px; }
.views input { appearance: none; width: 100px; height: 12px; background: linear-gradient(#aaa, #aaa) center / 100% 1px no-repeat; }
.views input::-webkit-slider-thumb { appearance: none; width: 5px; height: 11px; background: #666; }

.taskbar { flex: none; height: 40px; display: flex; align-items: center; color: #fff; background: linear-gradient(100deg, #000 70%, #0a1004 77%, #1f2c06 80%, #142006 86%, #070b03 100%); }
.task { width: 48px; height: 40px; position: relative; }
.apps { display: flex; gap: 1px; margin-left: 3px; }
.open::after { content: ""; position: absolute; left: 4px; right: 4px; bottom: 0; height: 2px; background: #76b9ed; }
.active { background: #333; }
.active::after { left: 0; right: 0; }
.tray { margin-left: auto; display: flex; align-items: center; gap: 6px; height: 40px; padding-right: 4px; font-size: 12px; }
.lang { margin-left: 3px; }
.clock { width: 68px; text-align: center; line-height: 18px; }
.bell { position: relative; width: 45px; height: 40px; border-right: 1px solid #555; padding-right: 5px; }
.bell b { position: absolute; left: 18px; top: 17px; width: 14px; text-align: center; font-weight: 400; font-size: 11px; line-height: 14px; }

.window { position: absolute; left: 20%; top: 130px; width: 821px; height: 462px; background: #006666; border: 1px solid #1a82cf; box-shadow: 0 4px 16px rgba(0, 0, 0, .38); font: 12px/16px "Liberation Sans", Arial, sans-serif; color: #000; }
.window > header { height: 30px; background: #fff; display: flex; align-items: center; padding-left: 8px; }
.window > header button { width: 46px; height: 30px; }
.window > header button:nth-of-type(1) { margin-left: auto; }
h1 { margin: 0; height: 70px; padding: 13px 0 0 10px; text-align: center; font: 700 24px/32px "Open Sans", "Noto Sans", sans-serif; white-space: nowrap; }
.cols { display: flex; align-items: flex-start; padding-left: 10px; }
.form { width: 450px; }
.line { margin: 0; padding: 0; border: 0; border-bottom: 1px solid #9fb0b6; display: flex; min-width: 0; }
.line > label, legend { float: left; width: 172px; padding: 9px 0 0; flex: none; }
.r42 { height: 42px; }
.r42 > label { padding-top: 11px; }
.r80 { height: 80px; }
.r40 { height: 40px; }
.r120 { height: 120px; }
.select { position: relative; width: 266px; height: 23px; margin-top: 12px; }
.select select { appearance: none; width: 100%; height: 23px; padding: 0 22px 0 4px; border: 1px solid #6f7f88; border-radius: 4px; background: linear-gradient(#fff, #e8eaf0 50%, #d3d6df 52%, #f2f4f8); font: 700 11px/20px "Open Sans", "Noto Sans", sans-serif; color: #000; }
.select i { position: absolute; right: 1px; top: 1px; width: 16px; height: 21px; display: flex; align-items: center; justify-content: center; border-left: 1px solid #8396aa; border-radius: 0 3px 3px 0; background: linear-gradient(#d8e3ee, #a4b9cd 50%, #b9cddf); pointer-events: none; }
.times, .theaters, .seats { display: grid; grid-auto-rows: 20px; align-content: start; padding-top: 7px; }
.times { grid-template-columns: repeat(3, 60px); }
.theaters { grid-template-columns: repeat(3, 80px); }
.times label, .theaters label, .seats label { display: flex; align-items: center; gap: 6px; white-space: nowrap; line-height: 18px; }
input[type=radio], input[type=checkbox] { appearance: none; flex: none; width: 14px; height: 14px; border: 1px solid #7c868c; background: linear-gradient(#fff, #e6e8ee 50%, #d5d8e0 55%, #f4f5f8); display: grid; place-items: center; box-shadow: 0 1px rgba(20, 50, 60, .5); }
input[type=radio] { border-radius: 50%; }
input[type=checkbox] { border-radius: 2px; }
input[type=radio]:checked, input[type=checkbox]:checked { background: linear-gradient(#f4f8fb, #b3c6d8 60%, #c8d9e8); border-color: #3f5873; }
input[type=radio]:checked::after { content: ""; width: 6px; height: 6px; border-radius: 3px; background: #111; }
input[type=checkbox]:checked::after { content: ""; width: 10px; height: 12px; background: #111; clip-path: polygon(5% 50%, 22% 45%, 42% 70%, 85% 0, 100% 4%, 48% 92%, 36% 92%); }
.field { width: 100%; height: 25px; padding: 0 3px; border: 1px solid #9ba8ad; border-top-color: #7f8a90; background: #fff; box-shadow: inset 0 1px 1px #ccc; outline: 0; color: #000; }
.short { width: 129px; margin-top: 10px; }
.btn { height: 25px; border: 1px solid #65757c; border-radius: 4px; background: linear-gradient(#fff, #e8eaef 45%, #d3d6df 55%, #f5f6fa); color: #000; white-space: nowrap; }
.seat-btn { width: 136px; margin: 10px 0 0 2px; }
.seats { margin-left: 24px; grid-template-columns: 60px 60px 50px 60px 50px; }
.rule { width: 1px; height: 320px; margin-left: 1px; background: #9fb0b6; }
.side { width: 306px; margin: 2px 0 0 30px; }
.area { display: flex; height: 66px; border: 1px solid #8c9aa0; background: #fff; }
.area textarea { flex: 1; min-width: 0; border: 0; padding: 1px 0 0 6px; resize: none; outline: 0; overflow: hidden; background: #fff; }
.actions { display: flex; justify-content: space-between; margin-top: 14px; }
.w143 { width: 143px; }
.w136 { width: 136px; }
.w92 { width: 92px; }
.w56 { width: 56px; }
.focus { background: linear-gradient(#fff, #f0f2f8 60%, #fff); border-color: #2d4a72; box-shadow: 0 0 0 1px #7faede; }
output { display: block; margin-top: 6px; text-align: center; }
.ticket { margin-top: 13px; height: 166px; padding: 7px 9px; border: 1px solid #8aa0a4; background: #003333; display: flex; flex-direction: column; gap: 5px; }
h2 { margin: 0 0 11px; font: 700 11px/16px "Open Sans", "Noto Sans", sans-serif; color: #fff; text-align: center; }
.foot { display: flex; justify-content: flex-end; gap: 8px; margin-top: 24px; }
</style>
